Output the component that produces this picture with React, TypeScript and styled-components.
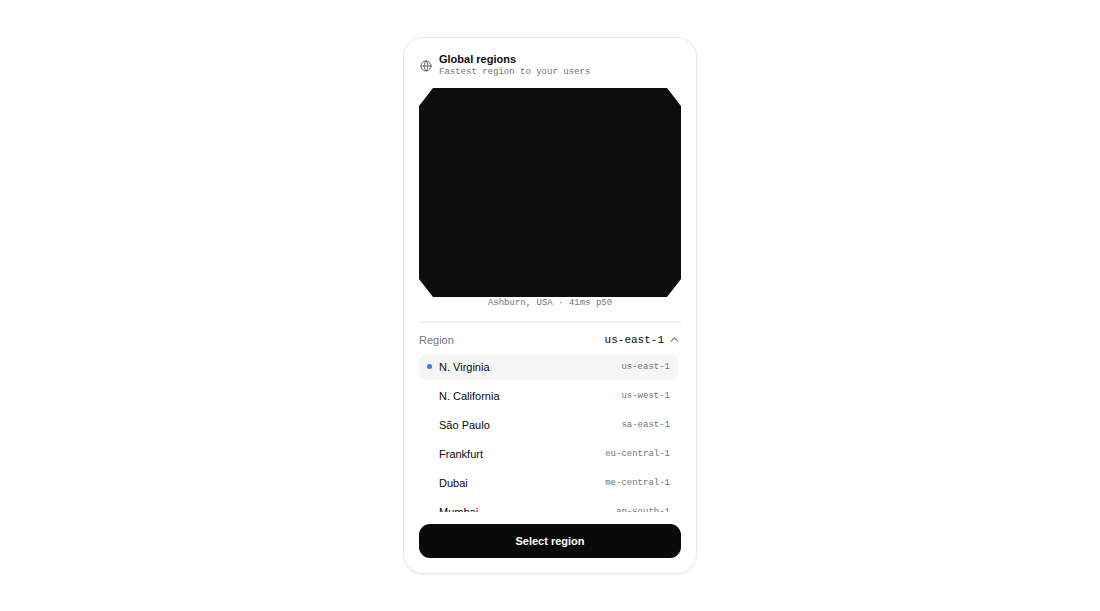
import { useState } from "react";
import styled, { createGlobalStyle } from "styled-components";
import { ChevronUp, Globe } from "lucide-react";

const GlobalStyle = createGlobalStyle`
  *, *::before, *::after { box-sizing: border-box; }
  body {
    margin: 0;
    background: #fff;
    color: #0a0a0a;
    font-family: "Liberation Sans", Arial, sans-serif;
  }
`;

const mono = `"Liberation Mono", "Courier New", monospace`;

const Page = styled.main`
  display: flex;
  align-items: center;
  justify-content: center;
  min-height: 100vh;
  padding: 0 16px;
`;

const Card = styled.section`
  display: flex;
  flex-direction: column;
  width: 100%;
  max-width: 294px;
  padding: 15px;
  border: 1px solid #e9e9e9;
  border-radius: 20px;
  background: #fff;
  box-shadow: 0 1px 2px rgba(0, 0, 0, 0.06);
`;

const Header = styled.header`
  display: flex;
  align-items: center;
  gap: 7px;
  margin-bottom: 10px;
  color: #666;
`;

const IconSlot = styled.span`
  display: flex;
  justify-content: center;
  width: 13px;
`;

const Title = styled.h1`
  margin: 0;
  color: #0a0a0a;
  font-size: 11px;
  font-weight: 700;
  line-height: 13px;
`;

const Note = styled.p<{ $centered?: boolean }>`
  margin: 0;
  color: #737373;
  font-family: ${mono};
  font-size: 9px;
  line-height: 12px;
  text-align: ${(p) => (p.$centered ? "center" : "left")};
`;

const GlobeStage = styled.div`
  height: 209px;
  background: #0d0d0d;
  clip-path: polygon(
    14px 0, calc(100% - 14px) 0, 100% 18px, 100% calc(100% - 18px),
    calc(100% - 14px) 100%, 14px 100%, 0 calc(100% - 18px), 0 18px
  );
`;

const Picker = styled.div`
  margin-top: 12px;
  border-top: 2px solid #f1f1f1;
`;

const Trigger = styled.button`
  display: flex;
  align-items: center;
  justify-content: space-between;
  width: 100%;
  height: 31px;
  padding: 2px 0 0;
  border: 0;
  background: none;
  color: #737373;
  font: inherit;
  font-size: 11px;
  cursor: pointer;
`;

const Current = styled.span`
  display: flex;
  align-items: center;
  gap: 4px;
`;

const CurrentCode = styled.span`
  color: #0a0a0a;
  font-family: ${mono};
`;

const Chevron = styled(ChevronUp)<{ $open: boolean }>`
  transform: rotate(${(p) => (p.$open ? 0 : 180)}deg);
`;

const Options = styled.div`
  display: flex;
  flex-direction: column;
  gap: 3px;
  height: 158px;
  padding-right: 3px;
  overflow-y: auto;
  scrollbar-width: none;
`;

const Option = styled.label<{ $selected: boolean }>`
  display: flex;
  flex: none;
  align-items: center;
  gap: 7px;
  height: 26px;
  padding: 0 8px 1px;
  border-radius: 7px;
  background: ${(p) => (p.$selected ? "#f5f5f5" : "transparent")};
  font-size: 11px;
  cursor: pointer;
`;

const Dot = styled.input`
  appearance: none;
  width: 5px;
  height: 5px;
  margin: 0;
  border-radius: 50%;
  &:checked { background: #3b76f0; }
`;

const Name = styled.span`
  flex: 1;
`;

const Code = styled.span`
  color: #737373;
  font-family: ${mono};
  font-size: 9px;
`;

const Submit = styled.button`
  height: 34px;
  margin-top: 12px;
  border: 0;
  border-radius: 11px;
  background: #0a0a0a;
  color: #fff;
  font: inherit;
  font-size: 11px;
  font-weight: 700;
  cursor: pointer;
`;

const regions = [
  { name: "N. Virginia", code: "us-east-1" },
  { name: "N. California", code: "us-west-1" },
  { name: "São Paulo", code: "sa-east-1" },
  { name: "Frankfurt", code: "eu-central-1" },
  { name: "Dubai", code: "me-central-1" },
  { name: "Mumbai", code: "ap-south-1" },
];

export default function App() {
  const [selected, setSelected] = useState("us-east-1");
  const [open, setOpen] = useState(true);

  return (
    <>
      <GlobalStyle />
      <Page>
        <Card>
          <Header>
            <IconSlot>
              <Globe size={12} strokeWidth={2} aria-hidden />
            </IconSlot>
            <div>
              <Title>Global regions</Title>
              <Note>Fastest region to your users</Note>
            </div>
          </Header>
          <GlobeStage />
          <Note $centered>Ashburn, USA · 41ms p50</Note>
          <Picker>
            <Trigger type="button" aria-expanded={open} onClick={() => setOpen(!open)}>
              <span>Region</span>
              <Current>
                <CurrentCode>{selected}</CurrentCode>
                <Chevron size={13} $open={open} aria-hidden />
              </Current>
            </Trigger>
            {open && (
              <Options role="radiogroup" aria-label="Region">
                {regions.map((r) => (
                  <Option key={r.code} $selected={r.code === selected}>
                    <Dot
                      type="radio"
                      name="region"
                      value={r.code}
                      checked={r.code === selected}
                      onChange={() => setSelected(r.code)}
                    />
                    <Name>{r.name}</Name>
                    <Code>{r.code}</Code>
                  </Option>
                ))}
              </Options>
            )}
          </Picker>
          <Submit type="button">Select region</Submit>
        </Card>
      </Page>
    </>
  );
}
